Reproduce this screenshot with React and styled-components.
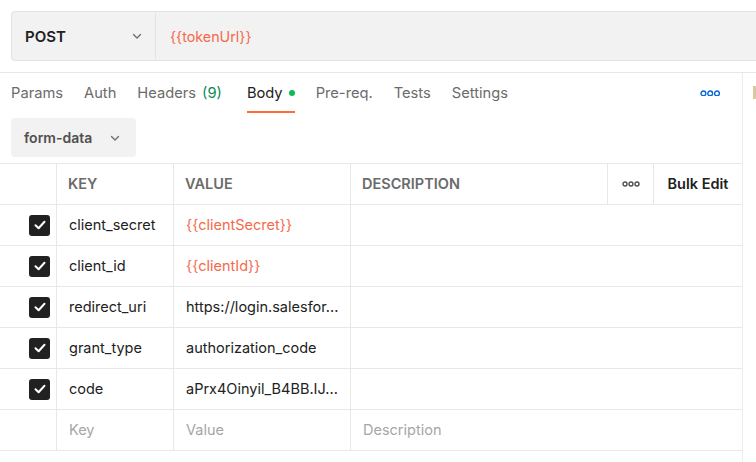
import styled, { createGlobalStyle } from "styled-components";

const GlobalStyle = createGlobalStyle`
    html, body {
        margin: 0;
        padding: 0;
        background: #ffffff;
        overflow: hidden;
    }
    body {
        font-family: Inter, "Noto Sans", "Liberation Sans", sans-serif;
        color: #212121;
    }
    * {
        box-sizing: border-box;
    }
`;

const TABS = [
    { label: "Params" },
    { label: "Auth" },
    { label: "Headers", count: "(9)" },
    { label: "Body", dot: true, active: true },
    { label: "Pre-req." },
    { label: "Tests" },
    { label: "Settings" },
];

const ROWS = [
    { key: "client_secret", value: "{{clientSecret}}", variable: true },
    { key: "client_id", value: "{{clientId}}", variable: true },
    { key: "redirect_uri", value: "https://login.salesfor..." },
    { key: "grant_type", value: "authorization_code" },
    { key: "code", value: "aPrx4Oinyil_B4BB.IJ..." },
];

function Chevron() {
    return (
        <svg width="12" height="12" viewBox="0 0 12 12" fill="none">
            <path d="M2.5 4.5L6 8L9.5 4.5" stroke="#6b6b6b" strokeWidth="1.3" strokeLinecap="round" strokeLinejoin="round" />
        </svg>
    );
}

function Dots({ color, r }) {
    return (
        <svg width={r * 6 + 6} height={r * 2 + 2} viewBox={`0 0 ${r * 6 + 6} ${r * 2 + 2}`} fill="none">
            {[0, 1, 2].map((i) => (
                <circle key={i} cx={1 + r + i * (2 * r + 2)} cy={1 + r} r={r} stroke={color} strokeWidth="1.4" />
            ))}
        </svg>
    );
}

function CheckIcon() {
    return (
        <svg width="12" height="10" viewBox="0 0 12 10" fill="none">
            <path d="M1.5 5.2L4.6 8.2L10.5 1.8" stroke="#ffffff" strokeWidth="2" strokeLinecap="round" strokeLinejoin="round" />
        </svg>
    );
}

export default function App() {
    return (
        <Page>
            <GlobalStyle />
            <UrlArea>
                <UrlBar>
                    <Method>
                        <span>POST</span>
                        <Chevron />
                    </Method>
                    <UrlInput>{"{{tokenUrl}}"}</UrlInput>
                </UrlBar>
            </UrlArea>
            <Workspace>
                <MainPane>
                    <TabBar>
                        {TABS.map((t) => (
                            <Tab key={t.label} $active={t.active}>
                                {t.label}
                                {t.count && <Count>{t.count}</Count>}
                                {t.dot && <GreenDot />}
                            </Tab>
                        ))}
                        <MoreButton>
                            <Dots color="#0b66d6" r={2.4} />
                        </MoreButton>
                    </TabBar>
                    <BodyToolbar>
                        <ModeSelect>
                            form-data
                            <Chevron />
                        </ModeSelect>
                    </BodyToolbar>
                    <Table>
                        <HeadCell />
                        <HeadCell $pad>KEY</HeadCell>
                        <HeadCell $pad>VALUE</HeadCell>
                        <HeadCell $pad>DESCRIPTION</HeadCell>
                        <HeadCell $center>
                            <Dots color="#505050" r={2} />
                        </HeadCell>
                        <HeadCell $center $strong $last>Bulk Edit</HeadCell>

                        {ROWS.map((row) => (
                            <Row key={row.key}>
                                <CheckCell>
                                    <Checkbox>
                                        <CheckIcon />
                                    </Checkbox>
                                </CheckCell>
                                <Cell>{row.key}</Cell>
                                <Cell $variable={row.variable}>{row.value}</Cell>
                                <Cell $wide />
                            </Row>
                        ))}

                        <Row>
                            <CheckCell />
                            <Cell $placeholder>Key</Cell>
                            <Cell $placeholder>Value</Cell>
                            <Cell $placeholder $wide>Description</Cell>
                        </Row>
                    </Table>
                </MainPane>
                <SideDivider />
                <SidePane>
                    <SideMark />
                </SidePane>
            </Workspace>
        </Page>
    );
}

const Page = styled.div`
    width: 756px;
    height: 462px;
    display: flex;
    flex-direction: column;
    overflow: hidden;
`

const UrlArea = styled.div`
    height: 73px;
    padding: 11px 0 11px 11px;
    border-bottom: 1px solid #e8e8e8;
    overflow: hidden;
`

const UrlBar = styled.div`
    width: calc(100% + 20px);
    height: 50px;
    display: flex;
    align-items: stretch;
    background: #f2f2f2;
    border: 1px solid #e3e3e3;
    border-radius: 4px;
`

const Method = styled.div`
    width: 144px;
    display: flex;
    align-items: center;
    justify-content: space-between;
    padding: 0 12px 0 13px;
    border-right: 1px solid #e3e3e3;
    font-size: 15px;
    font-weight: 600;
    color: #212121;
`

const UrlInput = styled.div`
    flex: 1;
    display: flex;
    align-items: center;
    padding-left: 14px;
    font-size: 14.3px;
    color: #f5694b;
`

const Workspace = styled.div`
    flex: 1;
    display: flex;
    min-height: 0;
`

const MainPane = styled.div`
    width: 742px;
    display: flex;
    flex-direction: column;
`

const TabBar = styled.div`
    height: 40px;
    display: flex;
    align-items: stretch;
    gap: 21px;
    padding: 0 11px;
`

const Tab = styled.div`
    display: flex;
    align-items: center;
    gap: 6px;
    margin-left: ${(p) => (p.$active ? "4px" : "0")};
    font-size: 14.7px;
    color: ${(p) => (p.$active ? "#212121" : "#6b6b6b")};
    border-bottom: 2px solid ${(p) => (p.$active ? "#ff6c37" : "transparent")};
    padding-top: 1px;
`

const Count = styled.span`
    color: #0a8a52;
`

const GreenDot = styled.span`
    width: 6px;
    height: 6px;
    border-radius: 50%;
    background: #0cbb52;
`

const MoreButton = styled.div`
    margin-left: auto;
    margin-right: 11px;
    display: flex;
    align-items: center;
`

const BodyToolbar = styled.div`
    padding: 5px 11px 6px;
    display: flex;
`

const ModeSelect = styled.div`
    width: 125px;
    height: 39px;
    display: flex;
    align-items: center;
    justify-content: space-between;
    padding: 0 15px 0 13px;
    background: #f2f2f2;
    border-radius: 4px;
    font-size: 14px;
    font-weight: 600;
    color: #505050;
`

const Table = styled.div`
    display: grid;
    grid-template-columns: 57px 117px 177px 257px 46px 88px;
    grid-auto-rows: 41px;
    border-top: 1px solid #e8e8e8;
`

const HeadCell = styled.div`
    display: flex;
    align-items: center;
    justify-content: ${(p) => (p.$center ? "center" : "flex-start")};
    padding: ${(p) => (p.$pad ? "0 11px 1px" : "0 0 1px")};
    border-right: ${(p) => (p.$last ? "none" : "1px solid #e8e8e8")};
    border-bottom: 1px solid #e8e8e8;
    font-size: 14.5px;
    font-weight: 600;
    color: ${(p) => (p.$strong ? "#212121" : "#6b6b6b")};
`

const Row = styled.div`
    display: contents;
`

const Cell = styled.div`
    grid-column: ${(p) => (p.$wide ? "span 3" : "auto")};
    display: flex;
    align-items: center;
    padding: 0 11px 1px 12px;
    border-right: ${(p) => (p.$wide ? "none" : "1px solid #e8e8e8")};
    border-bottom: 1px solid #e8e8e8;
    font-size: 14.5px;
    white-space: nowrap;
    overflow: hidden;
    color: ${(p) => (p.$placeholder ? "#a6a6a6" : p.$variable ? "#f5694b" : "#212121")};
`

const CheckCell = styled.div`
    display: flex;
    align-items: center;
    justify-content: flex-end;
    padding-right: 6px;
    border-right: 1px solid #e8e8e8;
    border-bottom: 1px solid #e8e8e8;
`

const Checkbox = styled.div`
    width: 21px;
    height: 21px;
    border-radius: 3px;
    background: #212121;
    display: flex;
    align-items: center;
    justify-content: center;
`

const SideDivider = styled.div`
    width: 2px;
    background: #ececec;
`

const SidePane = styled.div`
    flex: 1;
    padding: 13px 0 0 10px;
`

const SideMark = styled.div`
    width: 3px;
    height: 13px;
    background: #d9c9a3;
`
